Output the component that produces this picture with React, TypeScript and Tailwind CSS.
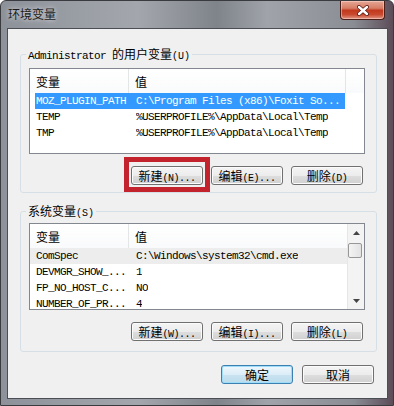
import clsx from "clsx";

const cjk = "font-['Noto_Sans_CJK_SC',sans-serif]";
const mono = "font-['Liberation_Mono','Noto_Sans_CJK_SC',monospace]";

const userVars = [
  ["MOZ_PLUGIN_PATH", "C:\\Program Files (x86)\\Foxit So..."],
  ["TEMP", "%USERPROFILE%\\AppData\\Local\\Temp"],
  ["TMP", "%USERPROFILE%\\AppData\\Local\\Temp"],
];

const sysVars = [
  ["ComSpec", "C:\\Windows\\system32\\cmd.exe"],
  ["DEVMGR_SHOW_...", "1"],
  ["FP_NO_HOST_C...", "NO"],
  ["NUMBER_OF_PR...", "4"],
];

function Btn({ label, hotkey, dots, primary }: { label: string; hotkey?: string; dots?: boolean; primary?: boolean }) {
  return (
    <button
      className={clsx(
        "flex h-[19px] w-[72px] items-baseline justify-center rounded-[3px] border pt-[1px] text-black",
        primary
          ? "border-[#3c7fb1] bg-[linear-gradient(to_bottom,#eef7fc_0%,#dcedf7_50%,#c9e3f1_51%,#bcdcec_100%)] shadow-[inset_0_0_0_1px_#9fdcf7]"
          : "border-[#707070] bg-[linear-gradient(to_bottom,#f4f4f4_0%,#ececec_50%,#dedede_51%,#d0d0d0_100%)] shadow-[inset_0_0_0_1px_#fbfbfb]"
      )}
    >
      <span className={clsx(cjk, "text-[12px] leading-[15px]")}>{label}</span>
      {hotkey && (
        <span className={clsx(mono, "text-[10px] leading-[15px] tracking-[-0.5px]")}>
          ({hotkey}){dots ? "..." : ""}
        </span>
      )}
    </button>
  );
}

function Header({ withEnd }: { withEnd?: boolean }) {
  return (
    <div className={clsx(cjk, "flex h-[24px] shrink-0 bg-[linear-gradient(to_bottom,#ffffff,#f9fafb)] text-[12px] leading-[16px] text-black")}>
      <div className="flex w-[99px] items-center border-r border-[#e3e5e7] pl-[6px] pt-[2px]">变量</div>
      <div className={clsx("flex w-[217px] items-center pl-[6px] pt-[2px]", withEnd && "border-r border-[#e3e5e7]")}>值</div>
      <div className="flex-1" />
    </div>
  );
}

function Row({ name, value, selected, hover }: { name: string; value: string; selected?: boolean; hover?: boolean }) {
  return (
    <div
      className={clsx(
        mono,
        "flex h-[16px] shrink-0 items-center whitespace-nowrap text-[11px] leading-[16px] tracking-[-0.6px]",
        selected ? "ml-[5px] w-[310px] bg-[#3399ff] text-white" : "text-black",
        hover && "bg-[#ededed]"
      )}
    >
      <div className={clsx("overflow-hidden", selected ? "w-[101px] pl-[1px]" : "w-[106px] pl-[6px]")}>{name}</div>
      <div className="overflow-hidden">{value}</div>
    </div>
  );
}

export default function App() {
  return (
    <div className="flex h-[406px] w-[394px] flex-col overflow-hidden rounded-t-[6px] border border-[#3a3b3e] bg-[linear-gradient(to_right,#8d9199_0%,#a3a7ad_35%,#7f838a_55%,#a0a4aa_68%,#8a8d94_90%,#5c4c58_100%)]">
      {/* title bar */}
      <div className="flex h-[27px] shrink-0 items-start justify-between">
        <div className={clsx(cjk, "pl-[7px] pt-[5px] text-[12px] leading-[16px] text-[#1b1b1b] [text-shadow:0_0_5px_rgba(255,255,255,0.9)]")}>
          环境变量
        </div>
        <div className="mr-[8px] flex h-[19px] w-[45px] items-center justify-center rounded-b-[4px] border border-t-0 border-[#4a1f1a] bg-[linear-gradient(to_bottom,#e6a796_0%,#d67d66_40%,#c2391e_52%,#c9492f_75%,#e29684_100%)] shadow-[inset_0_0_0_1px_rgba(255,220,210,0.5)]">
          <svg width="14" height="11" viewBox="0 0 14 11">
            <path d="M3 2 L11 9 M11 2 L3 9" stroke="#5a1a12" strokeWidth="4" strokeLinecap="round" />
            <path d="M3 2 L11 9 M11 2 L3 9" stroke="#ffffff" strokeWidth="2.4" strokeLinecap="round" />
          </svg>
        </div>
      </div>

      {/* client area */}
      <div className="mb-[6px] ml-[6px] mr-[5px] flex flex-1 flex-col border border-[#4b4f55] bg-[#f0f0f0]">
        <fieldset className="ml-[12px] mt-[17px] w-[357px] rounded-[3px] border border-[#d5dfe5] pb-[7px] pl-[8px] pr-[11px] pt-[6px]">
          <legend className="-ml-[3px] flex h-[16px] items-baseline px-[2px] text-black">
            <span className={clsx(mono, "text-[11px] leading-[16px] tracking-[-0.6px]")}>Administrator&nbsp;</span>
            <span className={clsx(cjk, "text-[12px] leading-[16px]")}>的用户变量</span>
            <span className={clsx(mono, "text-[10px] leading-[16px]")}>(U)</span>
          </legend>
          <div className="flex h-[86px] w-[336px] flex-col overflow-hidden border border-[#828790] bg-white">
            <Header withEnd />
            {userVars.map(([n, v], i) => (
              <Row key={n} name={n} value={v} selected={i === 0} />
            ))}
          </div>
          <div className="mr-[2px] mt-[12px] flex justify-end gap-[8px]">
            <div className="relative">
              <Btn label="新建" hotkey="N" dots />
              <span className="pointer-events-none absolute -bottom-[7px] -left-[7px] -right-[7px] -top-[9px] border-[5px] border-[#c3232d]" />
            </div>
            <Btn label="编辑" hotkey="E" dots />
            <Btn label="删除" hotkey="D" />
          </div>
        </fieldset>

        <fieldset className="ml-[12px] mt-[10px] w-[357px] rounded-[3px] border border-[#d5dfe5] pb-[10px] pl-[8px] pr-[11px] pt-[4px]">
          <legend className="-ml-[3px] flex h-[16px] items-baseline px-[2px] text-black">
            <span className={clsx(cjk, "text-[12px] leading-[16px]")}>系统变量</span>
            <span className={clsx(mono, "text-[10px] leading-[16px]")}>(S)</span>
          </legend>
          <div className="flex h-[87px] w-[336px] overflow-hidden border border-[#828790] bg-white">
            <div className="flex w-[317px] flex-col">
              <Header />
              {sysVars.map(([n, v], i) => (
                <Row key={n} name={n} value={v} hover={i === 0} />
              ))}
            </div>
            <div className="flex w-[17px] flex-col border-l border-[#e6e6e6] bg-[#f3f3f3]">
              <div className="flex h-[17px] items-center justify-center">
                <svg width="7" height="4" viewBox="0 0 7 4">
                  <path d="M0 4 L3.5 0 L7 4 Z" fill="#444" />
                </svg>
              </div>
              <div className="mt-[2px] h-[15px] w-[14px] rounded-[2px] border border-[#979797] bg-[linear-gradient(to_right,#f4f4f4,#e2e2e2)]" />
              <div className="flex-1" />
              <div className="flex h-[17px] items-center justify-center">
                <svg width="7" height="4" viewBox="0 0 7 4">
                  <path d="M0 0 L7 0 L3.5 4 Z" fill="#444" />
                </svg>
              </div>
            </div>
          </div>
          <div className="mr-[2px] mt-[12px] flex justify-end gap-[8px]">
            <Btn label="新建" hotkey="W" dots />
            <Btn label="编辑" hotkey="I" dots />
            <Btn label="删除" hotkey="L" />
          </div>
        </fieldset>

        <div className="mt-[13px] flex justify-end gap-[9px] pr-[13px]">
          <Btn label="确定" primary />
          <Btn label="取消" />
        </div>
      </div>
    </div>
  );
}
